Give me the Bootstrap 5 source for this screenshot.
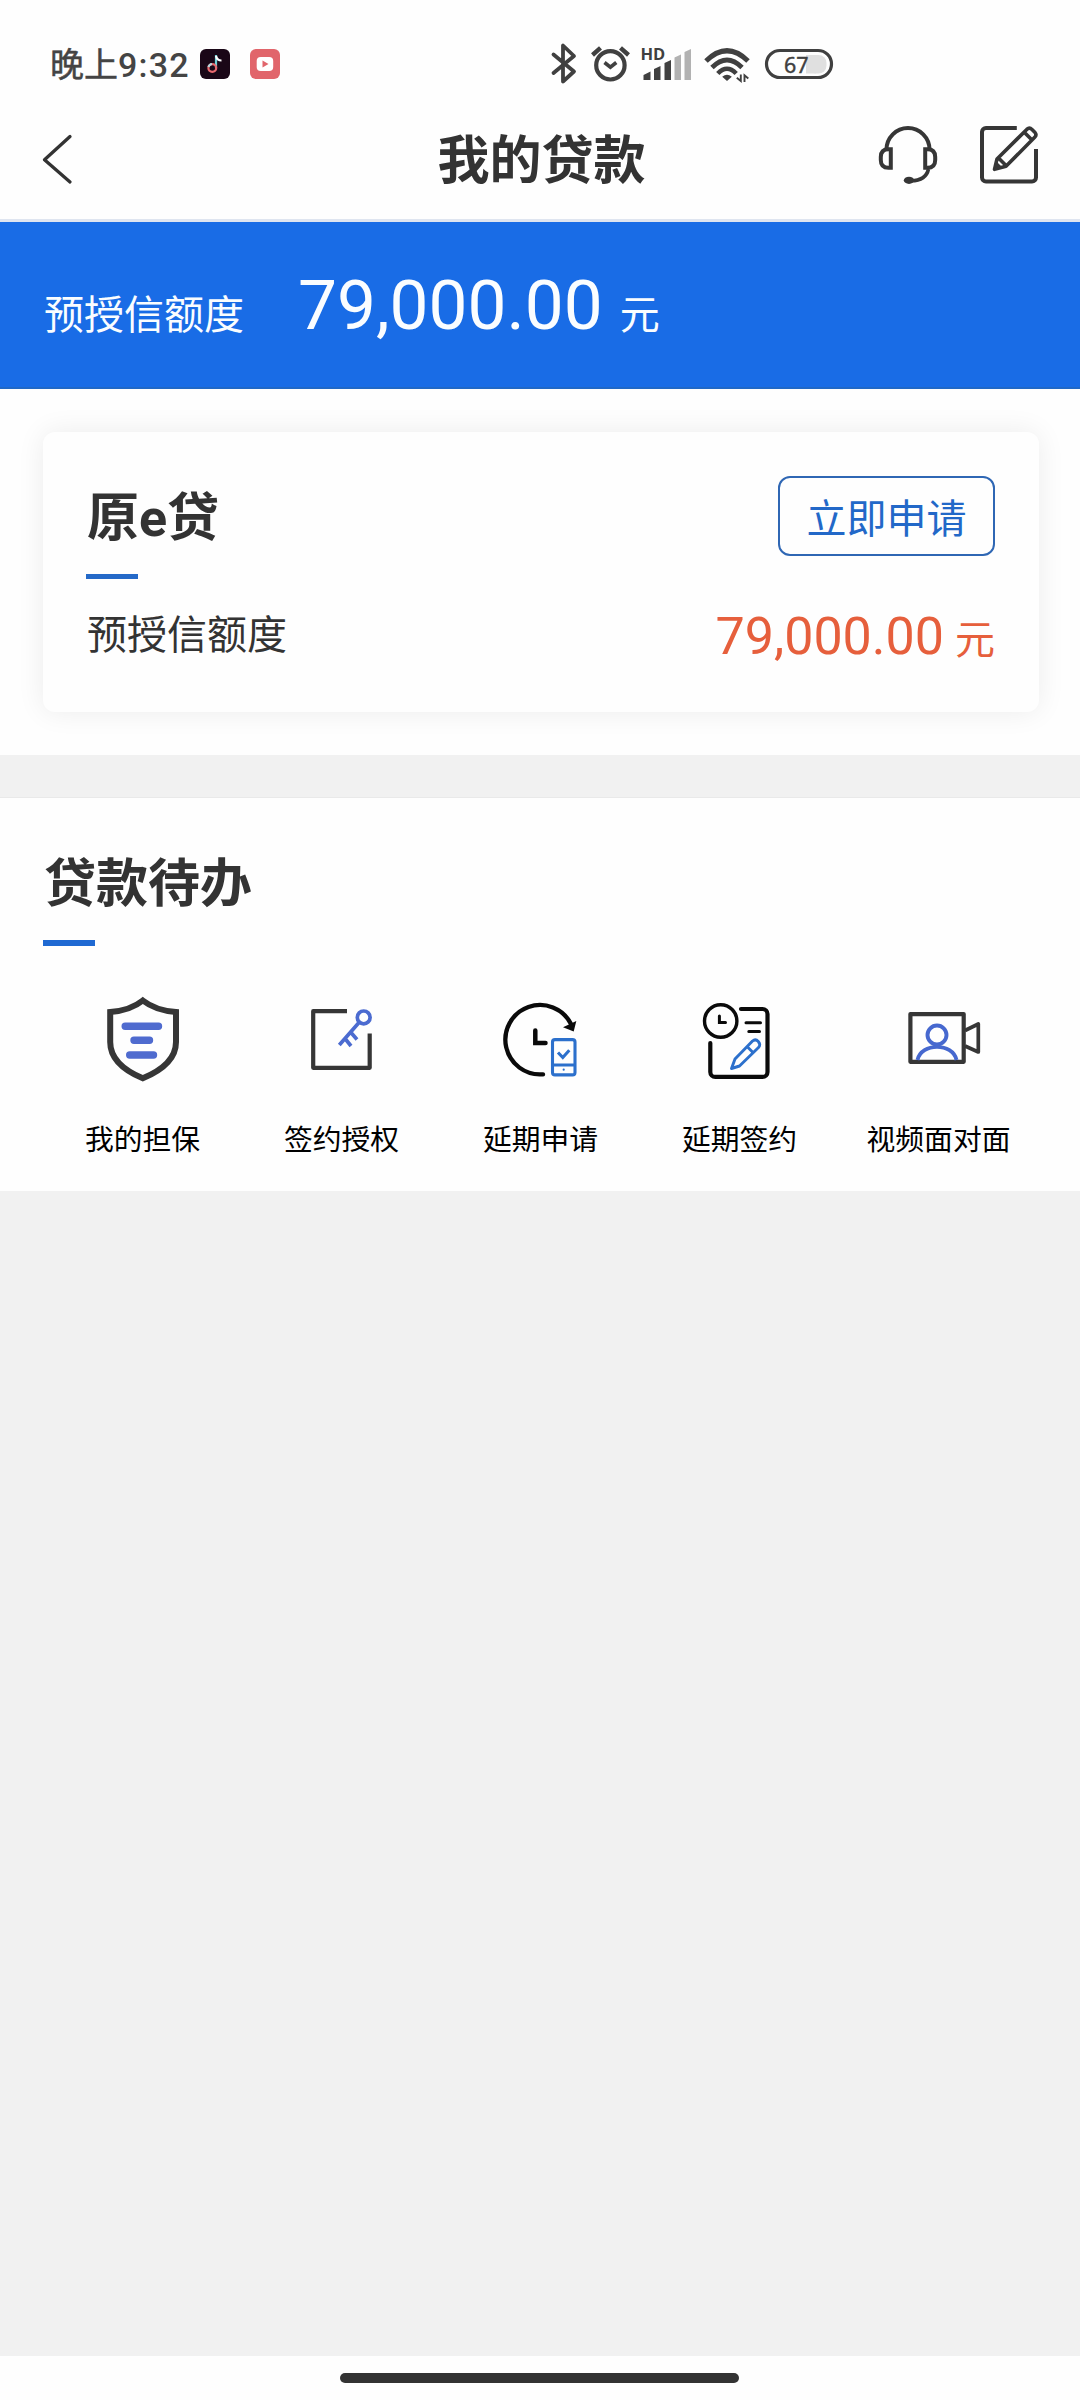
<!DOCTYPE html>
<html lang="zh-CN">
<head>
<meta charset="utf-8">
<meta name="viewport" content="width=device-width, initial-scale=1">
<title>我的贷款</title>
<link href="https://cdn.jsdelivr.net/npm/bootstrap@5.3.0/dist/css/bootstrap.min.css" rel="stylesheet">
<style>
  body { font-family: Roboto, "Noto Sans CJK SC", sans-serif; background: #f1f1f1; color: #333; line-height: 1; }
  svg { display: block; flex: none; }
  .screen { height: 2400px; }
  .surface { background: #fefefe; }
  .status-strip { height: 100px; padding: 39px 0 0 50px; color: #444; }
  .clock-text { font-size: 34px; line-height: 40px; font-weight: 500; width: 150px; letter-spacing: 1.2px; padding-top: 6px; }
  .clock-text span { font-size: 34px; font-weight: 400; -webkit-text-stroke: .5px #444; letter-spacing: 0; }
  .app-icons { margin-top: 10px; }
  .title-bar { height: 122px; border-bottom: 3px solid #dfe5f0; }
  .title-bar h1 { font-size: 52px; line-height: 76px; font-weight: 700; padding-left: 3px; }
  .side-slot { width: 240px; }
  .limit-banner { height: 167px; background: #196ce6; color: #fafdff; padding: 49px 44px 0; border-bottom: 2px solid #2068c6; }
  .t40 { font-size: 40px; line-height: 58px; }
  .limit-sum { font-size: 69.33px; margin-left: 54px; margin-right: 17px; }
  .loan-wrap { height: 366px; padding: 43px 41px 0 43px; }
  .loan-card { height: 280px; border: 0; border-radius: 12px; background: #fefefe; box-shadow: 0 0 28px rgba(0,0,0,.075); padding: 44px 44px 0 43px; }
  .head-text { font-size: 52px; line-height: 76px; font-weight: 700; color: #333; text-indent: 1px; }
  .head-text::after { content: ""; display: block; width: 52px; height: 5px; background: #2469c8; }
  .card-head { padding-top: 5px; }
  .card-head::after { margin-top: 17px; }
  .todo-head { padding-top: 1px; }
  .todo-head::after { margin-top: 17px; height: 6px; background: #1f69d2; }
  .apply-btn { width: 217px; height: 80px; padding: 7px 0 0; font-size: 40px; line-height: 70px; color: #2268c8; border: 2px solid #2f67b4; border-radius: 12px; }
  .loan-line { margin-top: 28px; }
  .loan-label { padding-left: 1px; }
  .loan-sum { color: #e65f3c; font-size: 52px; line-height: 58px; padding-top: 1px; }
  .loan-sum .t40 { margin-left: 11px; }
  .todo-panel { height: 394px; margin-top: 42px; padding: 48px 42px 0 43px; border-top: 1px solid #e9e9e9; }
  .todo-grid { padding-top: 47px; }
  .todo-item { font-size: 28.8px; line-height: 42px; color: #000; }
  .todo-item span { padding-top: 26px; }
  .home-strip { height: 44px; padding: 17px 1px 0 0; }
  .home-pill { width: 399px; height: 10px; border-radius: 5px; background: #333; }
</style>
</head>
<body>
<div class="screen d-flex flex-column">
  <div class="status-strip surface d-flex align-items-start">
    <div class="clock-text text-nowrap"><span>晚上</span>9:32</div>
    <svg class="app-icons" width="80" height="30" viewBox="200 49 80 30">
      <rect x="200" y="49" width="30" height="30" rx="6" fill="#1a0717"/>
      <g fill="none" stroke-width="2.2">
        <path d="M216 55V68" stroke="#6fd0d6"/>
        <path d="M216 56q1 4.500 5.500 4.500" stroke="#fff"/>
        <circle cx="212.300" cy="68" r="3.900" stroke="#e9696f"/>
        <path d="M208.500 67a4 4 0 0 1 3.500-3" stroke="#b6d7dc"/>
      </g>
      <rect x="250" y="49" width="30" height="30" rx="6" fill="#e1656b"/>
      <rect x="256.700" y="57" width="16.500" height="14" rx="4" fill="#fff"/>
      <path d="M262.500 60.500v7l6-3.500z" fill="#e1656b"/>
    </svg>
    <svg class="ms-auto me-0" width="550" height="50" viewBox="530 39 550 50" fill="none" stroke="#404040">
      <path d="M553.500 73L574 56 563 45.500V81.500L574 71.500 553.500 54.500" stroke-width="3.800" stroke-linejoin="round" stroke-linecap="round"/>
      <circle cx="610.400" cy="65.300" r="14.200" stroke-width="4.200"/>
      <path d="M604.500 62.500L610.400 67.200 616.300 62.500" stroke-width="3.600"/>
      <path d="M592.500 55L600.500 47.800M628.500 55L620.500 47.800" stroke-width="4.400"/>
      <text x="640.500" y="60.300" font-family="Open Sans" font-weight="700" font-size="16.500" fill="#404040" stroke="none">HD</text>
      <g stroke="none" fill="#404040">
        <path d="M643.500 80V75l7-3.500V80zM654 80V69l6.500-3V80zM664.500 80V63l6.500-3V80z"/>
        <path fill="#b2b2b2" d="M674.500 80V57.500l6.500-3V80zM684.500 80V52l6.500-3V80z"/>
        <path d="M727 81l-4.800-4.300q4.800-4 9.600 0z"/>
      </g>
      <g stroke-width="5">
        <path d="M706 61Q727 40.500 748 61"/>
        <path d="M712 67.500Q727 52.500 742 67.500" stroke-width="4.800"/>
        <path d="M717.800 73.500Q727 64 736.200 73.500" stroke-width="4.600"/>
      </g>
      <path d="M740.800 74.500V81l-4-3.300M744.500 82V75.300l3.800 3.200" stroke-width="1.900"/>
      <rect x="808" y="55" width="18.500" height="18.500" rx="8" fill="#e0e0e0" stroke="none"/>
      <path d="M806 55h10v18.500h-10z" fill="#e0e0e0" stroke="none"/>
      <rect x="766.500" y="50.500" width="65" height="27" rx="13.500" stroke-width="3.200"/>
      <text x="784" y="72.500" font-family="Noto Sans" font-size="21.500" fill="#404040" stroke="#404040" stroke-width=".4">67</text>
    </svg>
  </div>

  <header class="title-bar surface d-flex justify-content-between">
    <div class="side-slot">
      <svg width="120" height="110" viewBox="0 100 120 110" fill="none" stroke="#333" stroke-width="3.300" stroke-linecap="round" stroke-linejoin="round"><path d="M70 136.500L44.500 159.800 70 182"/></svg>
    </div>
    <h1 class="mb-0 mt-4">我的贷款</h1>
    <div class="side-slot">
      <svg width="240" height="110" viewBox="840 100 240 110" fill="none" stroke="#363636" stroke-width="4">
        <path d="M886.500 149.500a21.500 21.500 0 0 1 43 0"/>
        <path d="M890.800 149.300V167.800H888.500Q880.800 167.800 880.800 160V157Q880.800 149.300 888.500 149.300zM925.200 149.300V167.800H927.500Q935.200 167.800 935.200 160V157Q935.200 149.300 927.500 149.300z"/>
        <path d="M928.500 169Q926 180.500 911 180.800" stroke-width="3.600"/>
        <ellipse cx="909" cy="180.300" rx="5.200" ry="3.600" fill="#363636" stroke="none"/>
        <path d="M1016.800 128H986a4 4 0 0 0-4 4V177.500a4 4 0 0 0 4 4H1032a4 4 0 0 0 4-4V149"/>
        <path d="M994.500 169.300L997 159 1027 129.200Q1029.500 127 1032 129.500L1035 132.500Q1037 135 1034.700 137.300L1006 166.300zM998.500 158l8 8M1024.500 132.500l7 7" stroke-width="3.600" stroke-linejoin="round"/>
        <path d="M994 170l3-8 5 5z" fill="#363636" stroke="none"/>
      </svg>
    </div>
  </header>

  <section class="limit-banner d-flex align-items-baseline">
    <span class="t40">预授信额度</span>
    <span class="limit-sum">79,000.00</span>
    <span class="t40">元</span>
  </section>

  <section class="loan-wrap surface">
    <div class="card loan-card">
      <div class="d-flex justify-content-between align-items-start">
        <h2 class="head-text card-head mb-0">原e贷</h2>
        <button type="button" class="btn apply-btn">立即申请</button>
      </div>
      <div class="loan-line d-flex justify-content-between align-items-start">
        <span class="t40 loan-label">预授信额度</span>
        <span class="loan-sum">79,000.00<span class="t40">元</span></span>
      </div>
    </div>
  </section>

  <section class="todo-panel surface">
    <h2 class="head-text todo-head mb-0">贷款待办</h2>
    <div class="todo-grid row row-cols-5 g-0 text-center">
      <div class="col todo-item d-flex flex-column align-items-center">
        <svg width="100" height="100" viewBox="92.500 993 100 100" fill="none">
          <path d="M142.300 1000.500Q130 1010.500 109.700 1012V1042C109.700 1057 120 1069 142.300 1078.300 164.500 1069 175.500 1057 175.500 1042V1012Q155 1010.500 142.300 1000.500z" stroke="#363636" stroke-width="6"/>
          <path d="M124.700 1026.300H158M133.500 1040.300H149M129.200 1055H153" stroke="#4f6bcf" stroke-width="7.400" stroke-linecap="round"/>
        </svg>
        <span>我的担保</span>
      </div>
      <div class="col todo-item d-flex flex-column align-items-center">
        <svg width="100" height="100" viewBox="292 993 100 100" fill="none" stroke-width="4.200">
          <path d="M347 1011.200H313.200V1067.800H369.700V1033.500" stroke="#363636" stroke-linejoin="round"/>
          <g stroke="#4b6bd0" stroke-width="3.700"><circle cx="363.700" cy="1017.400" r="6.400"/><path d="M359 1022.500L339.300 1045M345 1038.500l6 7.500M350.500 1032l6.500 7.500"/></g>
        </svg>
        <span>签约授权</span>
      </div>
      <div class="col todo-item d-flex flex-column align-items-center">
        <svg width="100" height="100" viewBox="491 993 100 100" fill="none" stroke="#0a0a0a" stroke-width="4.300">
          <path d="M543 1074.300A34.700 34.700 0 1 1 571 1024" stroke-linecap="round"/>
          <path d="M563 1027.300l13.300-6.300-2.600 10.500z" fill="#0a0a0a" stroke="none"/>
          <path d="M535.300 1030.500V1043H545.500" stroke-linecap="round" stroke-width="4.500"/>
          <g stroke="#2c70cc" stroke-width="3.100"><rect x="552.500" y="1039.600" width="22.500" height="35.300" rx="2.500"/><path d="M552 1065H575M558 1052.500l4.800 5 6.500-7.200"/><circle cx="563.700" cy="1069.700" r="1.100" fill="#2c70cc" stroke="none"/></g>
        </svg>
        <span>延期申请</span>
      </div>
      <div class="col todo-item d-flex flex-column align-items-center">
        <svg width="100" height="100" viewBox="690 992.500 100 100" fill="none" stroke="#0a0a0a" stroke-width="4.200" stroke-linecap="round">
          <circle cx="720.700" cy="1020.500" r="16.200" stroke-width="3.400"/>
          <path d="M719.400 1015.500V1022H725.500M746 1022.300H760.500M748.800 1031H759.500" stroke-width="3"/>
          <path d="M741 1008.500H762.500a5 5 0 0 1 5 5V1071.400a5 5 0 0 1-5 5H715.300a5 5 0 0 1-5-5V1042.500"/>
          <path d="M731.500 1068L735 1058.500 752.500 1040.500Q755.500 1038 758.300 1041 761 1044 758.500 1047L739.500 1065.500zM747.500 1046.500l5.500 5.500" stroke="#2c70cc" stroke-width="2.900" stroke-linejoin="round"/>
        </svg>
        <span>延期签约</span>
      </div>
      <div class="col todo-item d-flex flex-column align-items-center">
        <svg width="100" height="100" viewBox="889 993 100 100" fill="none" stroke="#363636" stroke-width="4.200" stroke-linejoin="round">
          <path d="M965 1030.500L978.300 1024V1052L965 1046" stroke-width="3.700"/>
          <rect x="910.400" y="1014.100" width="53.300" height="47.700"/>
          <g stroke="#4668cf" stroke-width="3.900"><circle cx="937" cy="1035" r="9.500"/><path d="M917.500 1060C921 1042.500 953 1042.500 956.500 1060"/></g>
        </svg>
        <span>视频面对面</span>
      </div>
    </div>
  </section>

  <footer class="home-strip surface d-flex justify-content-center mt-auto">
    <div class="home-pill"></div>
  </footer>
</div>
<script src="https://cdn.jsdelivr.net/npm/bootstrap@5.3.0/dist/js/bootstrap.bundle.min.js"></script>
</body>
</html>
